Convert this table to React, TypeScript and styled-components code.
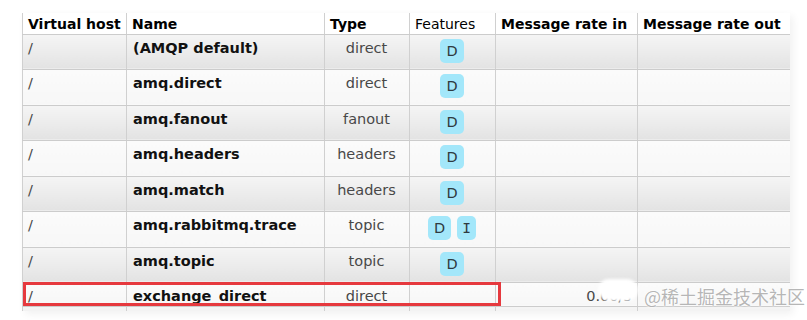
import React from "react";
import styled, { createGlobalStyle } from "styled-components";

const GlobalStyle = createGlobalStyle`
  body {
    margin: 0;
    background: #fff;
    font-family: "DejaVu Sans", Verdana, sans-serif;
  }
`;

interface Exchange {
  vhost: string;
  name: string;
  type: string;
  features: string[];
  rateIn?: string;
}

const exchanges: Exchange[] = [
  { vhost: "/", name: "(AMQP default)", type: "direct", features: ["D"] },
  { vhost: "/", name: "amq.direct", type: "direct", features: ["D"] },
  { vhost: "/", name: "amq.fanout", type: "fanout", features: ["D"] },
  { vhost: "/", name: "amq.headers", type: "headers", features: ["D"] },
  { vhost: "/", name: "amq.match", type: "headers", features: ["D"] },
  { vhost: "/", name: "amq.rabbitmq.trace", type: "topic", features: ["D", "I"] },
  { vhost: "/", name: "amq.topic", type: "topic", features: ["D"] },
  { vhost: "/", name: "exchange_direct", type: "direct", features: [], rateIn: "0.00/s" },
];

// the screenshot is cut off just below the last row
const rowHeights = [35, 36, 35, 36, 35, 36, 35, 24];

const App: React.FC = () => {
  return (
    <Page>
      <GlobalStyle />
      <Frame>
        <List>
          <colgroup>
            <col style={{ width: 104 }} />
            <col style={{ width: 198 }} />
            <col style={{ width: 85 }} />
            <col style={{ width: 86 }} />
            <col style={{ width: 142 }} />
            <col style={{ width: 153 }} />
          </colgroup>
          <thead>
            <tr>
              <Th>Virtual host</Th>
              <Th>Name</Th>
              <Th>Type</Th>
              <Th normal>Features</Th>
              <Th>Message rate in</Th>
              <Th>Message rate out</Th>
            </tr>
          </thead>
          <tbody>
            {exchanges.map((ex, i) => (
              <Row key={ex.name} alt={i % 2 === 0} style={{ height: rowHeights[i] }}>
                <Td>{ex.vhost}</Td>
                <NameCell>{ex.name}</NameCell>
                <Td center>{ex.type}</Td>
                <Td center>
                  <Badges>
                    {ex.features.map((f) => (
                      <Badge key={f} serif={f === "I"}>
                        {f}
                      </Badge>
                    ))}
                  </Badges>
                </Td>
                <Td right>{ex.rateIn}</Td>
                <Td />
              </Row>
            ))}
            <Row alt style={{ height: 35 }}>
              <Td />
              <Td />
              <Td />
              <Td />
              <Td />
              <Td />
            </Row>
          </tbody>
        </List>
        <Highlight />
        <Smudge />
      </Frame>
      <Watermark>@稀土掘金技术社区</Watermark>
    </Page>
  );
};

export default App;

const Page = styled.div`
  position: relative;
  padding: 13px 0 0 22px;
  height: 320px;
  box-sizing: border-box;
  overflow: hidden;
`;

const Frame = styled.div`
  position: relative;
  width: 768px;
  height: 298px;
  overflow: hidden;
  box-shadow: 3px 3px 8px rgba(0, 0, 0, 0.06);
`;

const List = styled.table`
  table-layout: fixed;
  border-collapse: collapse;
  width: 768px;
  font-size: 14.5px;
  line-height: 18px;
`;

const Th = styled.th<{ normal?: boolean }>`
  height: 21px;
  padding: 2px 5px 0;
  text-align: left;
  vertical-align: top;
  white-space: nowrap;
  color: #000;
  font-size: 14px;
  font-weight: ${({ normal }) => (normal ? "normal" : "bold")};
  border-left: 1px solid #d0d0d0;
  border-bottom: 1px solid #cccccc;
  box-sizing: border-box;
`;

const Row = styled.tr<{ alt?: boolean }>`
  td {
    background: ${({ alt }) =>
      alt
        ? "linear-gradient(to bottom, #f5f5f5 0%, #e3e3e3 100%)"
        : "linear-gradient(to bottom, #fbfbfb 0%, #f7f7f7 100%)"};
  }
`;

const Td = styled.td<{ center?: boolean; right?: boolean }>`
  padding: 4px 6px 0 5px;
  vertical-align: top;
  white-space: nowrap;
  color: #484848;
  text-align: ${({ center, right }) => (center ? "center" : right ? "right" : "left")};
  border-left: 1px solid #d0d0d0;
  border-bottom: 1px solid #cccccc;
  box-sizing: border-box;
`;

const NameCell = styled(Td)`
  font-weight: bold;
  color: #111;
  padding-left: 6px;
`;

const Badges = styled.div`
  display: flex;
  justify-content: center;
  gap: 6px;
`;

const Badge = styled.span<{ serif?: boolean }>`
  display: inline-block;
  padding: 3px ${({ serif }) => (serif ? "5px" : "6px")};
  line-height: 18px;
  border-radius: 5px;
  background: #a3e7fa;
  color: #2f3a40;
  font-size: 14.5px;
  font-family: ${({ serif }) =>
    serif ? '"DejaVu Sans Mono", monospace' : '"DejaVu Sans", sans-serif'};
`;

const Highlight = styled.div`
  position: absolute;
  left: 1px;
  top: 269px;
  width: 478px;
  height: 24px;
  border: 3px solid #e6393e;
  box-sizing: border-box;
`;

const Smudge = styled.div`
  position: absolute;
  left: 576px;
  top: 266px;
  width: 40px;
  height: 22px;
  border-radius: 12px;
  background: #fff;
  filter: blur(1.5px);
`;

const Watermark = styled.div`
  position: absolute;
  left: 644px;
  top: 285px;
  font-family: "Noto Sans CJK SC", "DejaVu Sans", sans-serif;
  font-size: 18px;
  line-height: 22px;
  color: rgba(150, 150, 150, 0.7);
  text-shadow: 0 0 2px #fff, 0 0 2px #fff;
  white-space: nowrap;
`;
